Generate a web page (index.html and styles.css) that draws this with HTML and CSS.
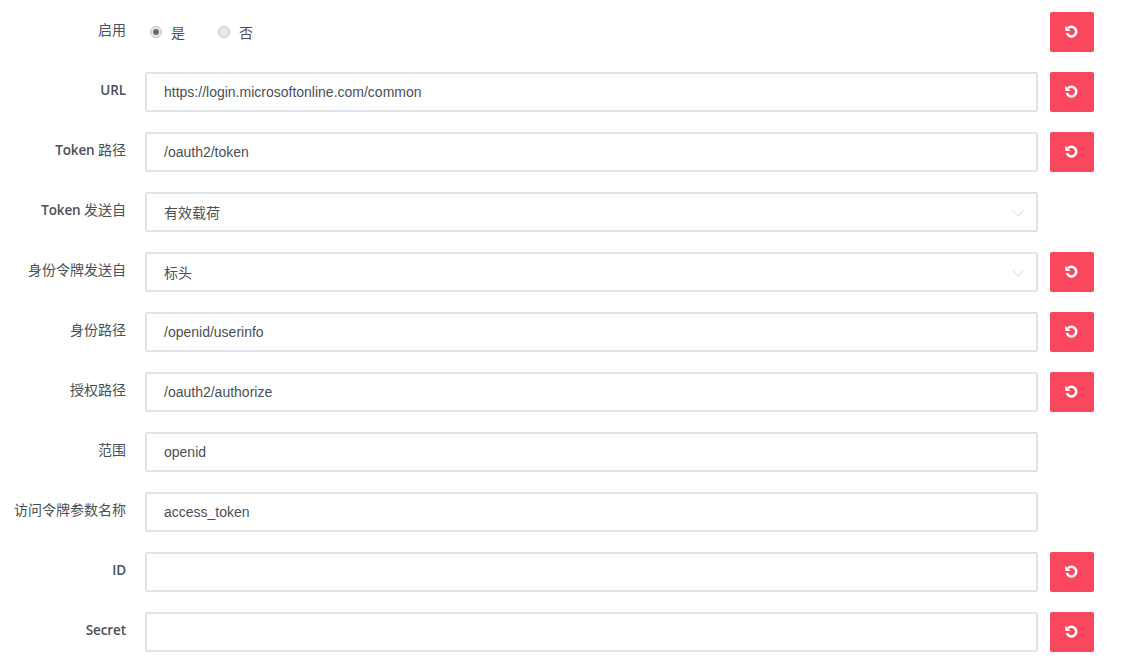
FILE: index.html
```html
<!DOCTYPE html>
<html lang="zh-CN">
<head>
<meta charset="utf-8">
<title>OAuth</title>
<link rel="stylesheet" href="styles.css">
</head>
<body>
<svg class="defs" width="0" height="0" aria-hidden="true"><defs>
<symbol id="undo" viewBox="0 0 13 13"><path d="M3 3.2A4.8 4.8 0 1 1 1.9 8.2" fill="none" stroke="currentColor" stroke-width="2.5"/><path d="M.3 .7V6H5.6Z" fill="currentColor"/></symbol>
<symbol id="chev" viewBox="0 0 12 7"><path d="M.7 .7 6 6 11.3 .7" fill="none" stroke="currentColor" stroke-width="1.2"/></symbol>
</defs></svg>
<form class="form">
  <div class="row">
    <label class="label">启用</label>
    <div class="field radios">
      <span class="radio"><i class="dot on"></i><span>是</span></span>
      <span class="radio"><i class="dot"></i><span>否</span></span>
    </div>
    <button type="button" class="reset"><svg class="ico"><use href="#undo"/></svg></button>
  </div>
  <div class="row">
    <label class="label"><span class="lat">URL</span></label>
    <div class="field input">https://login.microsoftonline.com/common</div>
    <button type="button" class="reset"><svg class="ico"><use href="#undo"/></svg></button>
  </div>
  <div class="row">
    <label class="label"><span class="lat">Token </span>路径</label>
    <div class="field input">/oauth2/token</div>
    <button type="button" class="reset"><svg class="ico"><use href="#undo"/></svg></button>
  </div>
  <div class="row">
    <label class="label"><span class="lat">Token </span>发送自</label>
    <div class="field input select">有效载荷<svg class="chev"><use href="#chev"/></svg></div>
  </div>
  <div class="row">
    <label class="label">身份令牌发送自</label>
    <div class="field input select">标头<svg class="chev"><use href="#chev"/></svg></div>
    <button type="button" class="reset"><svg class="ico"><use href="#undo"/></svg></button>
  </div>
  <div class="row">
    <label class="label">身份路径</label>
    <div class="field input">/openid/userinfo</div>
    <button type="button" class="reset"><svg class="ico"><use href="#undo"/></svg></button>
  </div>
  <div class="row">
    <label class="label">授权路径</label>
    <div class="field input">/oauth2/authorize</div>
    <button type="button" class="reset"><svg class="ico"><use href="#undo"/></svg></button>
  </div>
  <div class="row">
    <label class="label">范围</label>
    <div class="field input">openid</div>
  </div>
  <div class="row">
    <label class="label">访问令牌参数名称</label>
    <div class="field input">access_token</div>
  </div>
  <div class="row">
    <label class="label"><span class="lat">ID</span></label>
    <div class="field input"></div>
    <button type="button" class="reset"><svg class="ico"><use href="#undo"/></svg></button>
  </div>
  <div class="row">
    <label class="label"><span class="lat">Secret</span></label>
    <div class="field input"></div>
    <button type="button" class="reset"><svg class="ico"><use href="#undo"/></svg></button>
  </div>
</form>
</body>
</html>
```
FILE: styles.css
```css
* { box-sizing: border-box; }
html, body { margin: 0; padding: 0; background: #fff; overflow: hidden; }
body { width: 1121px; height: 670px; font-family: "Liberation Sans", "Noto Sans CJK SC", sans-serif; color: #495057; }
.defs { position: absolute; }
.form { display: flex; flex-direction: column; gap: 20px; padding-top: 12px; }
.row { display: flex; height: 40px; }
.label { width: 126px; margin-right: 19px; padding-top: 8px; text-align: right; font: 14px/18px "Noto Sans CJK SC", sans-serif; color: #495057; white-space: nowrap; }
.lat { font: 600 13.5px/18px "Open Sans", sans-serif; letter-spacing: -0.1px; white-space: pre; }
.field { width: 893px; height: 40px; margin-right: 12px; font-size: 14px; line-height: 20px; }
.input { display: flex; align-items: center; justify-content: space-between; border: 2px solid #e0e4e8; border-radius: 2px; padding: 0 16px 0 17px; background: #fff; }
.select { padding-top: 2px; padding-right: 12px; }
.chev { width: 12px; height: 7px; color: #dfe3e7; }
.radios { display: flex; align-items: center; gap: 33px; padding-left: 5px; }
.radio { display: flex; align-items: center; gap: 9px; }
.radio span { position: relative; top: 1px; }
.dot { display: flex; align-items: center; justify-content: center; width: 12px; height: 12px; border: 1px solid #bcc1c6; border-radius: 50%; background: #e7e9eb; }
.dot.on::after { content: ""; width: 6px; height: 6px; border-radius: 50%; background: #666c72; }
.reset { display: flex; align-items: center; justify-content: center; width: 44px; height: 40px; padding: 0 1px 0 0; border: 0; border-radius: 2px; background: #f9475e; color: #fff; }
.ico { width: 13px; height: 13px; position: relative; top: -1px; }
```
